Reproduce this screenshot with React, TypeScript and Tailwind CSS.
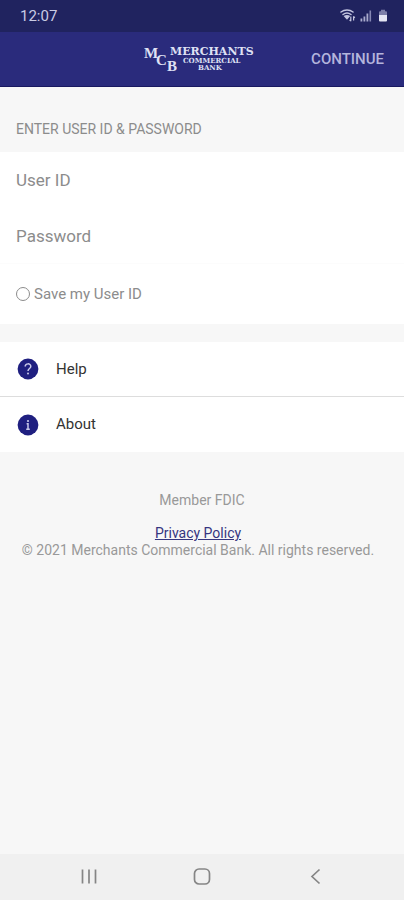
import React, { useState } from 'react';

interface MenuRowProps {
  label: string;
  children: React.ReactNode;
}

function StatusBar() {
  return (
    <div className="flex h-8 items-center justify-between bg-[#20235f] pr-4 pl-5">
      <span className="text-[15px] text-[#c9cbe4]">12:07</span>
      <svg width="48" height="16" viewBox="0 0 48 16" fill="none" aria-label="Wi-Fi, signal and battery">
        {/* wifi with traffic arrows */}
        <g stroke="#c3c5e0" strokeWidth="1.5" strokeLinecap="round">
          <path d="M1 4C4.5 1.4 9.5 1.4 13 4" />
          <path d="M3 6.5C5.5 4.7 8.5 4.7 11 6.5" />
        </g>
        <path d="M3.6 8C6 6.8 8 6.8 10.2 8L7 11.8z" fill="#c3c5e0" />
        <path d="M10.8 8.6v4.6M9.6 11.8l1.2 1.4M13.6 12.4V8.2M13.6 8.4l1.2 1.4" stroke="#c3c5e0" strokeWidth="1.2" />
        {/* signal */}
        <path d="M20.5 10.5h1.8v3h-1.8zM23.5 8.5h1.8v5h-1.8zM26.5 5.5h1.8v8h-1.8z" fill="#a9abcd" />
        <path d="M29.5 2.5h1.6v11h-1.6z" fill="#8688b4" />
        {/* battery */}
        <path d="M41 1.8h4v1.4h1a1 1 0 0 1 1 1V7h-8V4.2a1 1 0 0 1 1-1h1z" fill="#7c7ea8" />
        <path d="M39 7h8v5.6a1 1 0 0 1-1 1h-6a1 1 0 0 1-1-1z" fill="#e4e5f3" />
      </svg>
    </div>
  );
}

function BankLogo() {
  return (
    <svg
      width="116"
      height="30"
      viewBox="0 0 116 30"
      fill="#dfe1f4"
      role="img"
      aria-label="Merchants Commercial Bank"
      className="font-['DejaVu_Serif','Liberation_Serif',serif] font-bold"
    >
      <g className="font-['Liberation_Serif',serif]" fontSize="15">
        <text x="0" y="14">M</text>
        <text x="12" y="21">C</text>
        <text x="23" y="27">B</text>
      </g>
      <text x="26" y="11" fontSize="11">MERCHANTS</text>
      <text x="39" y="19" fontSize="7">COMMERCIAL</text>
      <text x="54" y="26" fontSize="7">BANK</text>
    </svg>
  );
}

function MenuRow({ label, children }: MenuRowProps) {
  return (
    <button type="button" className="flex h-[55px] w-full items-center gap-4 bg-white px-4 text-left text-[15px] text-[#333333]">
      <svg width="24" height="24" viewBox="0 0 24 24" fill="none" aria-hidden="true">
        <circle cx="12" cy="12" r="10.4" fill="#1f1f80" />
        {children}
      </svg>
      {label}
    </button>
  );
}

export default function App() {
  const [userId, setUserId] = useState('');
  const [password, setPassword] = useState('');
  const [saveId, setSaveId] = useState(false);

  return (
    <div className="flex min-h-screen flex-col bg-[#f7f7f7] font-['Roboto','Liberation_Sans',sans-serif]">
      <StatusBar />
      <header className="grid h-[55px] grid-cols-[1fr_auto_1fr] items-center border-b border-[#191960] bg-[#2a2b7c] px-4">
        <span />
        <BankLogo />
        <button type="button" className="justify-self-end pr-1 text-[15px] font-medium text-[#b4b5dc]">
          CONTINUE
        </button>
      </header>

      <main className="flex-1">
        <form onSubmit={(e) => e.preventDefault()}>
          <h1 className="px-4 pt-8 pb-3 text-sm leading-[21px] text-[#8c8c8c]">ENTER USER ID &amp; PASSWORD</h1>
          <div className="bg-white">
            <input
              type="text"
              aria-label="User ID"
              placeholder="User ID"
              value={userId}
              onChange={(e) => setUserId(e.target.value)}
              className="block h-14 w-full px-4 text-[17px] text-[#333333] outline-none placeholder:text-[#8c8c8c]"
            />
            <input
              type="password"
              aria-label="Password"
              placeholder="Password"
              value={password}
              onChange={(e) => setPassword(e.target.value)}
              className="block h-14 w-full border-b border-[#fcfcfc] px-4 text-[17px] text-[#333333] outline-none placeholder:text-[#8c8c8c]"
            />
            <label className="flex h-[60px] items-center gap-1 px-4 text-[15px] text-[#8c8c8c]">
              <input
                type="checkbox"
                checked={saveId}
                onChange={(e) => setSaveId(e.target.checked)}
                className="size-[14px] appearance-none rounded-full border border-[#8c8c8c] checked:bg-[#1f1f80]"
              />
              Save my User ID
            </label>
          </div>
        </form>

        <nav className="mt-[18px] divide-y divide-[#dddddd]">
          <MenuRow label="Help">
            <path d="M9.2 9.6c0-3.6 5.6-3.6 5.6-.2 0 2-2.8 2.2-2.8 4.6" stroke="#c9c9ea" strokeWidth="1.5" />
            <circle cx="12" cy="16.6" r="1" fill="#c9c9ea" />
          </MenuRow>
          <MenuRow label="About">
            <circle cx="12" cy="8" r="1.1" fill="#c9c9ea" />
            <path d="M10.6 10.8H12v5.4M10.2 16.2h3.6" stroke="#c9c9ea" strokeWidth="1.5" />
          </MenuRow>
        </nav>

        <footer className="px-4 pt-10 text-center text-sm leading-[17px] text-[#999999]">
          <p>Member FDIC</p>
          <div className="pt-4 pr-2">
            <a href="#privacy" className="text-[#35357f] underline">Privacy Policy</a>
            <p>© 2021 Merchants Commercial Bank. All rights reserved.</p>
          </div>
        </footer>
      </main>

      <div className="flex h-[46px] items-center justify-around bg-[#f0f0f0] px-8 text-[#858585]">
        <button type="button" aria-label="Recent apps">
          <svg width="20" height="20" viewBox="0 0 20 20" stroke="currentColor" strokeWidth="1.7">
            <path d="M3.5 2.5v14M10 2.5v14M16.5 2.5v14" />
          </svg>
        </button>
        <button type="button" aria-label="Home">
          <svg width="20" height="20" viewBox="0 0 20 20" fill="none" stroke="currentColor" strokeWidth="1.7">
            <rect x="2.5" y="2" width="15" height="15" rx="4.5" />
          </svg>
        </button>
        <button type="button" aria-label="Back">
          <svg width="20" height="20" viewBox="0 0 20 20" fill="none" stroke="currentColor" strokeWidth="1.7">
            <path d="M14.5 2.5 7 9.5l7.5 7" />
          </svg>
        </button>
      </div>
    </div>
  );
}
